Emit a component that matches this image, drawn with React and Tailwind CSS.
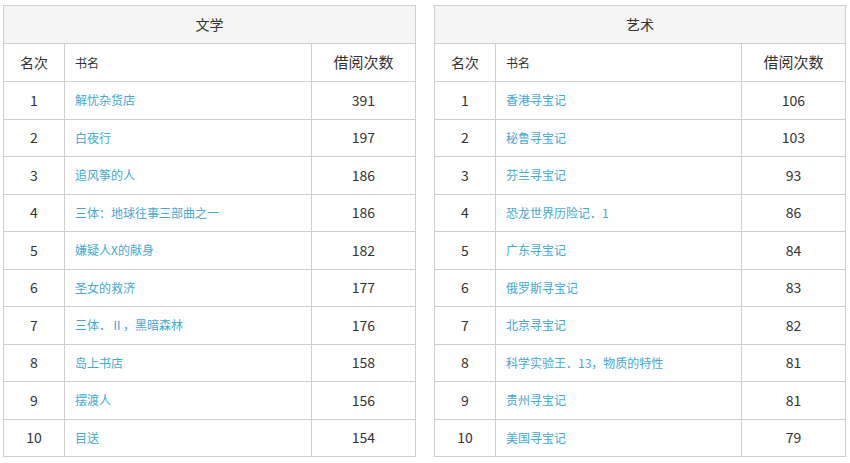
import React from 'react'

const literature = [
  ['解忧杂货店', 391],
  ['白夜行', 197],
  ['追风筝的人', 186],
  ['三体：地球往事三部曲之一', 186],
  ['嫌疑人X的献身', 182],
  ['圣女的救济', 177],
  ['三体．Ⅱ，黑暗森林', 176],
  ['岛上书店', 158],
  ['摆渡人', 156],
  ['目送', 154],
]

const art = [
  ['香港寻宝记', 106],
  ['秘鲁寻宝记', 103],
  ['芬兰寻宝记', 93],
  ['恐龙世界历险记．1', 86],
  ['广东寻宝记', 84],
  ['俄罗斯寻宝记', 83],
  ['北京寻宝记', 82],
  ['科学实验王．13，物质的特性', 81],
  ['贵州寻宝记', 81],
  ['美国寻宝记', 79],
]

function RankTable({ title, rows, width }) {
  return (
    <table className={`${width} border-collapse table-fixed text-[#333]`}>
      <colgroup>
        <col className="w-[61px]" />
        <col />
        <col className="w-[104px]" />
      </colgroup>
      <thead>
        <tr className="h-[38px] bg-[#f5f5f5]">
          <th colSpan={3} className="border border-[#cfcfcf] font-normal text-[14px]">{title}</th>
        </tr>
        <tr className="h-[38px]">
          <th className="border border-[#cfcfcf] font-normal text-[14px]">名次</th>
          <th className="border border-[#cfcfcf] font-normal text-[12px] text-left pl-[10px]">书名</th>
          <th className="border border-[#cfcfcf] font-normal text-[15px]">借阅次数</th>
        </tr>
      </thead>
      <tbody>
        {rows.map(([name, count], i) => (
          <tr key={name} className="h-[37.5px]">
            <td className="border border-[#cfcfcf] text-center text-[14px]">{i + 1}</td>
            <td className="border border-[#cfcfcf] pl-[10px] text-[12px] text-[#45a8d2]">
              <a href="#">{name}</a>
            </td>
            <td className="border border-[#cfcfcf] text-center text-[14px]">{count}</td>
          </tr>
        ))}
      </tbody>
    </table>
  )
}

export default function App() {
  return (
    <div
      className="w-[850px] h-[463px] bg-white pt-[5px] pl-[3px] flex gap-[18px] items-start"
      style={{ fontFamily: '"Noto Sans CJK SC", "Noto Sans", sans-serif' }}
    >
      <RankTable title="文学" rows={literature} width="w-[413px]" />
      <RankTable title="艺术" rows={art} width="w-[412px]" />
    </div>
  )
}
